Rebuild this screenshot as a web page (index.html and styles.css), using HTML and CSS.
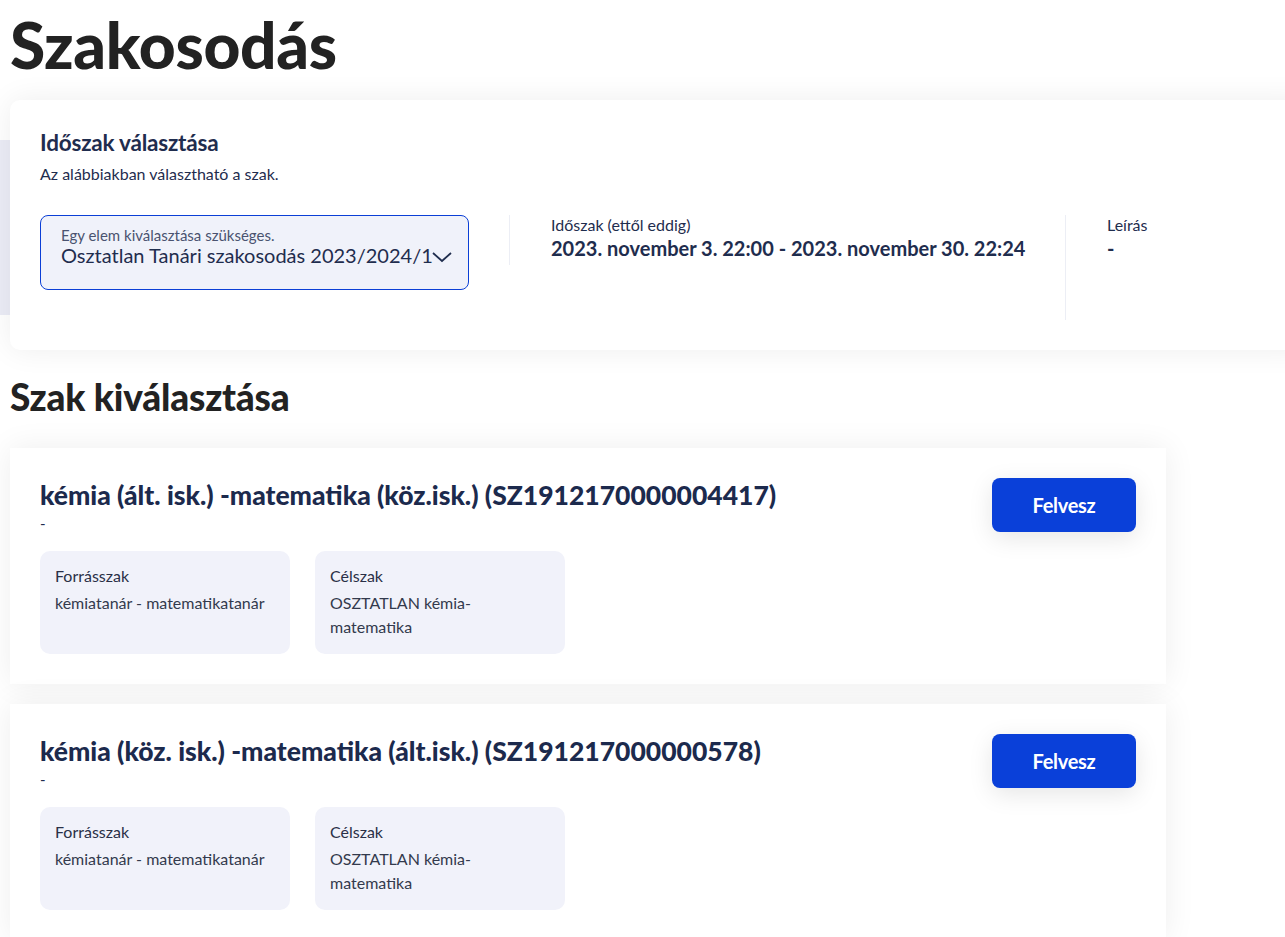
FILE: index.html
```html
<!DOCTYPE html>
<html lang="hu">
<head>
  <meta charset="UTF-8">
  <title>Szakosodás</title>
  <link rel="stylesheet" href="styles.css">
</head>
<body>
  <div class="page">
    <h1>Szakosodás</h1>

    <div class="period-wrap">
      <div class="side-strip"></div>
      <div class="period-card">
        <h3>Időszak választása</h3>
        <p class="sub">Az alábbiakban választható a szak.</p>

        <div class="period-row">
          <div class="select-box">
            <div class="select-label">Egy elem kiválasztása szükséges.</div>
            <div class="select-value">Osztatlan Tanári szakosodás 2023/2024/1</div>
            <svg class="chevron" width="22" height="14" viewBox="0 0 22 14">
              <path d="M2 3 L11 11 L20 3" fill="none" stroke="#1f2d4e" stroke-width="1.8"/>
            </svg>
          </div>
          <div class="col col-date">
            <div class="col-label">Időszak (ettől eddig)</div>
            <div class="col-value">2023. november 3. 22:00 - 2023. november 30. 22:24</div>
          </div>
          <div class="col col-desc">
            <div class="col-label">Leírás</div>
            <div class="col-value">-</div>
          </div>
        </div>
      </div>
    </div>

    <h2>Szak kiválasztása</h2>

    <div class="course">
      <div class="course-head">
        <div>
          <div class="course-title">kémia (ált. isk.) -matematika (köz.isk.) (SZ1912170000004417)</div>
          <div class="course-desc">-</div>
        </div>
        <button class="add-btn">Felvesz</button>
      </div>
      <div class="boxes">
        <div class="box">
          <div class="box-label">Forrásszak</div>
          <div class="box-text">kémiatanár - matematikatanár</div>
        </div>
        <div class="box">
          <div class="box-label">Célszak</div>
          <div class="box-text">OSZTATLAN kémia-matematika</div>
        </div>
      </div>
    </div>

    <div class="course">
      <div class="course-head">
        <div>
          <div class="course-title">kémia (köz. isk.) -matematika (ált.isk.) (SZ191217000000578)</div>
          <div class="course-desc">-</div>
        </div>
        <button class="add-btn">Felvesz</button>
      </div>
      <div class="boxes">
        <div class="box">
          <div class="box-label">Forrásszak</div>
          <div class="box-text">kémiatanár - matematikatanár</div>
        </div>
        <div class="box">
          <div class="box-label">Célszak</div>
          <div class="box-text">OSZTATLAN kémia-matematika</div>
        </div>
      </div>
    </div>
  </div>
</body>
</html>
```

FILE: styles.css
```css
body {
  margin: 0;
  font-family: Lato, "Open Sans", sans-serif;
  background-color: #fff;
  color: #1f2d4e;
  overflow: hidden;
}

.page {
  padding-left: 10px;
}

h1 {
  margin: 0;
  padding-top: 10px;
  height: 90px;
  font-size: 64px;
  font-weight: 900;
  color: #222;
  line-height: 70px;
  letter-spacing: -0.3px;
}

h2 {
  margin: 0;
  height: 98px;
  padding-top: 26px;
  box-sizing: border-box;
  font-size: 37px;
  font-weight: 900;
  color: #222;
  line-height: 42px;
  letter-spacing: -0.2px;
}

/* Időszak kártya */
.period-wrap {
  position: relative;
}

.side-strip {
  position: absolute;
  left: -10px;
  top: 40px;
  width: 20px;
  height: 175px;
  background-color: #ebecf6;
}

.period-card {
  position: relative;
  width: 1300px;
  height: 250px;
  box-sizing: border-box;
  padding: 30px 30px;
  background-color: #fff;
  border-radius: 10px;
  box-shadow: 0 0 30px rgba(0, 0, 0, 0.07);
}

.period-card h3 {
  margin: 0;
  font-size: 22.5px;
  font-weight: 700;
  line-height: 26px;
  letter-spacing: -0.2px;
}

.sub {
  margin: 8px 0 0;
  font-size: 16px;
  line-height: 20px;
}

.period-row {
  display: flex;
  margin-top: 31px;
}

.select-box {
  position: relative;
  width: 429px;
  height: 75px;
  box-sizing: border-box;
  padding: 10px 20px;
  border: 1px solid #0b3fd6;
  border-radius: 8px;
  background-color: #f0f2fa;
}

.select-label {
  font-size: 15px;
  line-height: 18px;
  color: #4a5370;
}

.select-value {
  font-size: 20px;
  line-height: 22px;
  white-space: nowrap;
}

.chevron {
  position: absolute;
  left: 390px;
  top: 34px;
}

.col {
  padding-left: 41px;
  border-left: 1px solid #eceef5;
}

.col-date {
  margin-left: 40px;
  width: 514px;
  height: 50px;
}

.col-desc {
  height: 105px;
}

.col-label {
  font-size: 16px;
  line-height: 20px;
}

.col-value {
  font-size: 20px;
  font-weight: 700;
  line-height: 26px;
}

/* Szak kártyák */
.course {
  width: 1156px;
  box-sizing: border-box;
  padding: 30px 30px;
  margin-bottom: 20px;
  background-color: #fff;
  box-shadow: 0 0 30px rgba(0, 0, 0, 0.07);
}

.course-head {
  display: flex;
  justify-content: space-between;
}

.course-title {
  font-size: 26.5px;
  font-weight: 900;
  line-height: 34px;
  color: #1c2a4d;
}

.course-desc {
  font-size: 15px;
  line-height: 22px;
}

.add-btn {
  width: 144px;
  height: 54px;
  border: none;
  border-radius: 8px;
  background-color: #0a40d9;
  color: #fff;
  font-family: Lato, sans-serif;
  font-size: 20px;
  font-weight: 700;
  letter-spacing: -0.3px;
  box-shadow: 0 6px 24px rgba(0, 0, 0, 0.1);
  cursor: pointer;
}

.boxes {
  display: flex;
  gap: 25px;
  margin-top: 17px;
}

.box {
  width: 250px;
  height: 103px;
  box-sizing: border-box;
  padding: 14px 15px;
  border-radius: 10px;
  background-color: #f1f2fa;
}

.box-label {
  font-size: 16px;
  line-height: 22px;
  color: #2a3047;
}

.box-text {
  margin-top: 4px;
  font-size: 16px;
  line-height: 24px;
  color: #333a4d;
}
```
